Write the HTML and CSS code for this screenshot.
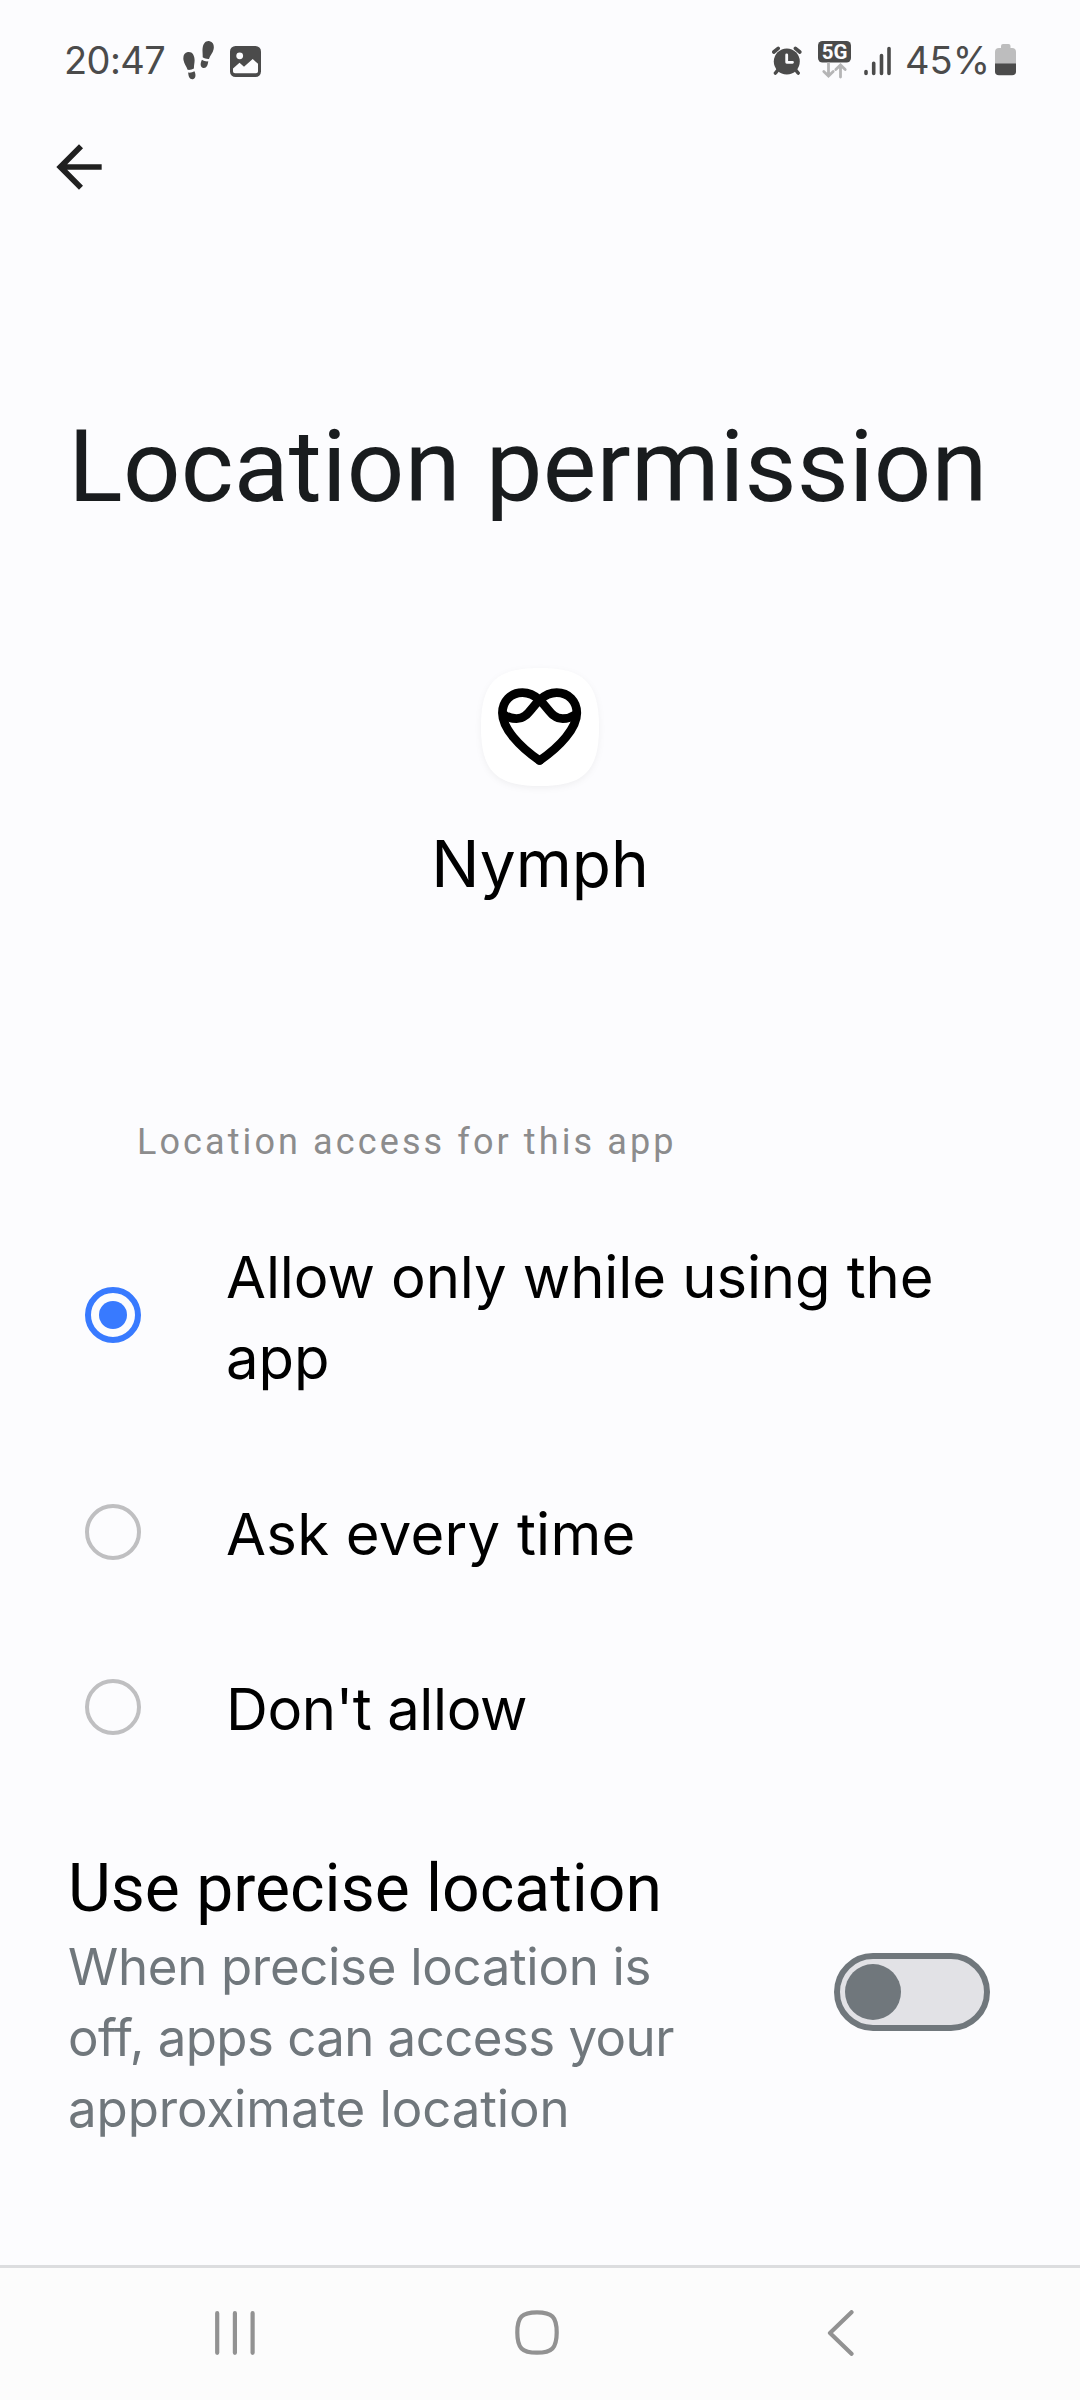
FILE: index.html
```html
<!DOCTYPE html>
<html lang="en">
<head>
<meta charset="utf-8">
<title>Location permission</title>
<link rel="stylesheet" href="styles.css">
</head>
<body>
<div class="screen">
  <header class="status">
    <div class="status-left">
      <span class="clock">20:47</span>
      <svg class="steps" width="32" height="40" viewBox="0 0 32 40">
        <g transform="translate(6.3 20.5) rotate(-9)">
          <path d="M0-9.5C4.500-9.500 6-5.500 5.500-1C5.200 2 3.800 4.500 3.500 7.700C1.500 8.600-1 8.600-3 8C-3.300 4.500-5.500 1.500-5.500-2.500C-5.500-6.500-3.500-9.500 0-9.500Z"/>
          <path d="M-2.800 10.700C-1 11.400 1.500 11.300 3.500 10.500C4.500 13.500 4.200 18 .8 18C-2.500 18-3.300 14.500-2.800 10.700Z"/>
        </g>
        <g transform="translate(24.700 9.500) rotate(12)">
          <path d="M0-9.500C-4-9.500-5.800-6-5.500-1.500C-5.200 2-4 4.500-3.500 7.700C-1.500 8.600 1 8.600 3 8C3.300 4.500 5.500 1.500 5.500-2.500C5.500-6.500 3.500-9.500 0-9.500Z"/>
          <path d="M2.800 10.500C1 11.200-1.500 11.100-3.700 10.300C-4.700 13.500-4.200 18-.8 18C2.500 18 3.300 14.500 2.800 10.500Z"/>
        </g>
      </svg>
      <svg class="picture" width="31" height="31" viewBox="0 0 31 31">
        <rect width="31" height="31" rx="5.500"/>
        <circle class="cut" cx="9.700" cy="9.800" r="3.400"/>
        <path class="cut" d="M3 22.500L9.500 16.800L14 20.800L22.700 13L28 17.800V25.500Q28 27.300 26 27.300H5Q3 27.300 3 25.500Z"/>
      </svg>
    </div>
    <div class="status-right">
      <svg class="alarm" width="30" height="30" viewBox="0 0 30 30">
        <circle cx="14.800" cy="15.500" r="13"/>
        <path class="line" d="M1.800 6L6.200 2.300M27.800 6L23.400 2.300M5.500 24.500L3.500 27M24.100 24.500L26.100 27"/>
        <path class="hand" d="M14.700 8.800V16.300H20.500"/>
      </svg>
      <svg class="network" width="34" height="38" viewBox="0 0 34 38">
        <rect width="33" height="21.500" rx="4.500"/>
        <text x="16.500" y="17.700" text-anchor="middle">5G</text>
        <path class="arrows" d="M10.500 22.500V34.500M5.800 30.500L10.500 35L15.200 30.500M22.500 36V24.500M17.800 28.500L22.500 24L27.200 28.500"/>
      </svg>
      <svg class="signal" width="28" height="30" viewBox="0 0 28 30">
        <path d="M2 25.500V27.500M9.700 17.300V27.500M17.500 9.500V27.500M25 2.500V27.500"/>
      </svg>
      <span class="percent">45%</span>
      <svg class="battery" width="21" height="32" viewBox="0 0 21 32">
        <path class="empty" d="M6 4V2Q6 0 8 0H13.500Q15.500 0 15.500 2V4H17Q21 4 21 8V20H0V8Q0 4 4 4Z"/>
        <path d="M0 19.500H21V27.500Q21 31.300 17 31.300H4Q0 31.300 0 27.500Z"/>
      </svg>
    </div>
  </header>

  <div class="appbar">
    <svg width="68" height="68" viewBox="0 0 24 24"><path d="M20 11H7.830l5.590-5.590L12 4l-8 8 8 8 1.410-1.410L7.830 13H20v-2z"/></svg>
  </div>

  <h1 class="title">Location permission</h1>

  <section class="app">
    <svg class="app-icon" width="118" height="118" viewBox="0 0 118 118">
      <path class="tile" d="M59 0C103 0 118 15 118 59S103 118 59 118S0 103 0 59S15 0 59 0Z"/>
      <g id="half" class="heart">
        <path d="M58.600 32C53 27 47.500 24.700 41.500 24.700C29.500 24.700 21.400 33.500 21.400 45C21.400 60 38 78.500 58.600 92.500"/>
        <path d="M58.600 32C49 41 46 50.600 35.500 50.600C30.500 50.600 27 49.500 23.500 47"/>
      </g>
      <use href="#half" transform="translate(117.200 0) scale(-1 1)"/>
    </svg>
    <div class="app-name">Nymph</div>
  </section>

  <div class="label">Location access for this app</div>

  <div class="options">
    <div class="option">
      <span class="radio checked"></span>
      <div class="option-text">Allow only while using the<br>app</div>
    </div>
    <div class="option">
      <span class="radio"></span>
      <div class="option-text ask">Ask every time</div>
    </div>
    <div class="option">
      <span class="radio"></span>
      <div class="option-text deny">Don't allow</div>
    </div>
  </div>

  <section class="precise">
    <div class="precise-text">
      <h2>Use precise location</h2>
      <p><span class="tight">When precise location is</span><br><span class="tighter">off, apps can access your</span><br>approximate location</p>
    </div>
    <div class="switch"><span class="thumb"></span></div>
  </section>

  <nav class="nav">
    <svg width="40" height="44" viewBox="0 0 40 44"><path d="M2.200 2.200V41.800M19.900 2.200V41.800M37.600 2.200V41.800"/></svg>
    <svg class="home-key" width="44" height="45" viewBox="0 0 44 45"><path d="M22 2.300C37 2.300 41.700 7 41.700 22.500S37 42.700 22 42.700S2.300 38 2.300 22.500S7 2.300 22 2.300Z"/></svg>
    <svg width="28" height="46" viewBox="0 0 28 46"><path d="M24.500 2.200L3 23L24.500 43.800"/></svg>
  </nav>
</div>
</body>
</html>
```
FILE: styles.css
```css
* { box-sizing: border-box; }
body { margin: 0; background: #fcfcfe; }
svg { display: block; flex: none; }

.screen {
  width: 1080px;
  height: 2400px;
  display: flex;
  flex-direction: column;
  font-family: Inter, "Liberation Sans", sans-serif;
  color: #000;
  background: #fcfcfe;
  overflow: hidden;
}

/* status bar */
.status {
  height: 120px;
  padding: 0 64px 0 64px;
  display: flex;
  justify-content: space-between;
  color: #4b4b4b;
  font-size: 38px;
  line-height: 120px;
  white-space: nowrap;
}
.status svg { fill: #4b4b4b; }
.status-left, .status-right { display: flex; }
.clock { width: 119px; letter-spacing: -.6px; }
.steps { margin-top: 41px; }
.picture { margin: 46px 0 0 15px; }
.cut { fill: #fcfcfe; }
.alarm { margin-top: 46px; }
.alarm .line { stroke: #4b4b4b; stroke-width: 3.600; stroke-linecap: round; }
.alarm .hand { fill: none; stroke: #fcfcfe; stroke-width: 2.800; stroke-linecap: round; stroke-linejoin: round; }
.network { margin: 41px 0 0 16px; }
.network text { fill: #fcfcfe; font: 700 20.500px Roboto, sans-serif; }
.network .arrows { fill: none; stroke: #b5b5b6; stroke-width: 2.800; stroke-linecap: round; }
.signal { margin: 46px 0 0 12px; }
.status .signal path { stroke: #4b4b4b; stroke-width: 3.600; stroke-linecap: round; }
.percent { width: 90px; margin-left: 13px; letter-spacing: 0; }
.battery { margin-top: 44px; }
.status .empty { fill: #bdbdbe; }

/* app bar */
.appbar { height: 287px; padding: 12.800px 0 0 45.300px; }
.appbar svg { fill: #202020; }

.title {
  margin: 0;
  padding-left: 68.300px;
  height: 261px;
  font: 400 101px/120px Roboto, sans-serif;
  letter-spacing: .19px;
  color: #191c1e;
  white-space: nowrap;
}

.app {
  height: 450px;
  display: flex;
  flex-direction: column;
  align-items: center;
}
.app-icon { overflow: visible; }
.tile { fill: #fff; filter: drop-shadow(0 2px 3px rgba(0, 0, 0, .05)); }
.heart { fill: none; stroke: #000; stroke-width: 8.700; stroke-linecap: round; stroke-linejoin: round; }
.app-name { margin-top: 38px; font-size: 64px; line-height: 80px; }

.label {
  height: 119px;
  padding-left: 137px;
  font: 36px/48px Roboto, sans-serif;
  letter-spacing: 3.100px;
  color: #8c8c8d;
}

/* radio options */
.options { display: flex; flex-direction: column; gap: 94.500px; height: 611px; }
.option { display: flex; align-items: center; padding-left: 85px; }
.radio {
  flex: none;
  width: 56px;
  height: 56px;
  margin: -5px 85px 0 0;
  border: 4px solid #bfbfc1;
  border-radius: 50%;
}
.checked {
  display: grid;
  place-items: center;
  margin-top: -6px;
  border: 6px solid #387aff;
}
.checked::after { content: ""; width: 28px; height: 28px; border-radius: 50%; background: #387aff; }
.option-text { font-size: 58px; line-height: 81px; letter-spacing: -.1px; white-space: nowrap; }
.ask { letter-spacing: .25px; }
.deny { letter-spacing: -.4px; }

/* precise location */
.precise { height: 417px; padding: 0 90px 0 68px; display: flex; justify-content: space-between; }
.precise h2 { margin: 1px 0 2px; font: 400 66px/80px Roboto, sans-serif; }
.precise p { margin: 0; font-size: 51px; line-height: 71px; color: #70777c; letter-spacing: -.1px; white-space: nowrap; }
.precise .tight { letter-spacing: -.33px; }
.precise .tighter { letter-spacing: -.57px; }
.switch {
  width: 156px;
  height: 78px;
  margin-top: 105px;
  border: 6px solid #70777c;
  border-radius: 39px;
  background: #e2e2e6;
  display: flex;
  align-items: center;
  padding-left: 5px;
}
.thumb { width: 56px; height: 56px; border-radius: 50%; background: #70777c; }

/* navigation bar */
.nav {
  height: 135px;
  border-top: 3px solid #dcdddf;
  background: #fcfcfc;
  display: flex;
  justify-content: space-between;
  align-items: center;
  padding: 0 225px 3px 215px;
}
.home-key { margin-right: 9px; }
.nav path { fill: none; stroke: #929292; stroke-width: 4.200; stroke-linecap: round; stroke-linejoin: round; }
```
